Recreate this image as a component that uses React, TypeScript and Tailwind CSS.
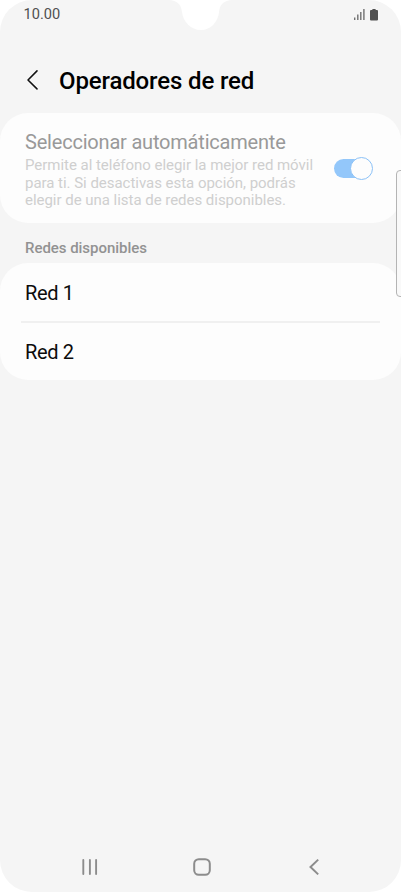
import { useState } from "react"

interface ToggleProps {
  checked: boolean
  disabled?: boolean
  onChange: (value: boolean) => void
}

function Toggle({ checked, disabled, onChange }: ToggleProps) {
  return (
    <button
      type="button"
      role="switch"
      aria-checked={checked}
      aria-label="Seleccionar automáticamente"
      disabled={disabled}
      onClick={() => onChange(!checked)}
      className={`flex items-center w-[38px] h-[19px] rounded-full shrink-0 ${
        checked ? "justify-end bg-[#93c7fa]" : "justify-start bg-[#cccccc]"
      }`}
    >
      <span className="w-[23px] h-[23px] -mr-px shrink-0 rounded-full border border-[#8bc1f7] bg-[#fdfdfd]" />
    </button>
  )
}

function StatusBar() {
  return (
    <div className="flex justify-between h-[30px] pl-[23.5px] pr-[23px]">
      <span className="pt-[5px] text-[14.6px] leading-[18px] text-[#505050]">10.00</span>

      <div className="flex gap-[5px] pt-[9px]">
        <svg width="11" height="11" viewBox="0 0 11 11" fill="#707070">
          <rect x="0" y="8.5" width="1.4" height="2.5" />
          <rect x="3.1" y="5.5" width="1.4" height="5.5" />
          <rect x="6.1" y="3" width="1.4" height="8" />
          <rect x="9.2" y="0" width="1.4" height="11" />
        </svg>
        <svg width="8" height="12" viewBox="0 0 8 12" fill="#505050">
          <path d="M2.3 1V.5Q2.3 0 2.8 0h2.4q.5 0 .5.5V1H7q1 0 1 1v8.5Q8 11.5 7 11.5H1q-1 0-1-1V2Q0 1 1 1z" />
        </svg>
      </div>
    </div>
  )
}

function NavBar() {
  return (
    <nav className="flex items-center h-[51px] pl-[81px] pr-[78px] justify-between text-[#8c8c8c]">
      <button aria-label="Recientes">
        <svg width="18" height="18" viewBox="0 0 18 18" stroke="currentColor" strokeWidth="1.9" strokeLinecap="round">
          <path d="M2.3 2v14M8.9 2v14M15.1 2v14" />
        </svg>
      </button>

      <button aria-label="Inicio">
        <svg width="18" height="18" viewBox="0 0 18 18" fill="none" stroke="currentColor" strokeWidth="2">
          <rect x="1.2" y="1.2" width="15.6" height="15.6" rx="4.6" />
        </svg>
      </button>

      <button aria-label="Atrás">
        <svg width="18" height="18" viewBox="0 0 18 18" fill="none" stroke="currentColor" strokeWidth="2">
          <path d="M13.2 1.6 5.5 9l7.7 7.4" />
        </svg>
      </button>
    </nav>
  )
}

export default function App() {

  const [auto, setAuto] = useState(true)

  const networks = ["Red 1", "Red 2"]

  return (
    <div className="w-[401px] h-[892px] bg-white overflow-hidden font-[Roboto,sans-serif]">

      <div className="relative flex flex-col h-full rounded-[32px] bg-[#f5f5f5] overflow-hidden">

        {/* Camera notch */}

        <svg className="absolute top-0 left-[169px]" width="64" height="30" viewBox="0 0 64 30" fill="#ffffff">
          <path d="M0 0C8 .5 12 4 13 12C14 22 22 30 32 30S49 22 50 12C51 4 55 .5 63 0z" />
        </svg>

        <StatusBar />

        <header className="flex items-center h-[83px] pl-[26px] pt-[17px]">
          <button aria-label="Volver" className="w-[33px]">
            <svg width="13" height="20" viewBox="0 0 13 20" fill="none" stroke="#111111" strokeWidth="1.5" strokeLinecap="round" strokeLinejoin="round">
              <path d="M11 .9 2 10l9 8.9" />
            </svg>
          </button>
          <h1 className="pt-[2px] text-[24px] leading-[28px] font-medium tracking-[-0.13px] text-black">
            Operadores de red
          </h1>
        </header>

        <section className="flex items-center justify-between h-[110px] pl-[25px] pr-[29px] rounded-[28px] bg-[#fdfdfd]">
          <div className="pt-[4px]">
            <h2 className="text-[20px] leading-[24px] tracking-[-0.2px] text-[#999999]">
              Seleccionar automáticamente
            </h2>
            <p className="pt-[3px] text-[15px] leading-[17.5px] tracking-[-0.03px] text-[#cfcfcf] whitespace-nowrap">
              Permite al teléfono elegir la mejor red móvil<br />
              para ti. Si desactivas esta opción, podrás<br />
              elegir de una lista de redes disponibles.
            </p>
          </div>
          <Toggle checked={auto} disabled onChange={setAuto} />
        </section>

        <h3 className="h-[40px] pl-[25px] pt-[16px] text-[15px] leading-[18px] font-medium tracking-[-0.04px] text-[#929292]">
          Redes disponibles
        </h3>

        <ul className="h-[117px] px-[21px] rounded-[28px] bg-[#fdfdfd] divide-y-2 divide-[#f0f0f0]">
          {networks.map((name) => (
            <li key={name} className="flex items-center h-[60px] pt-[2px] last:pt-0 last:h-[57px] pl-[4px] text-[20px] tracking-[-0.35px] text-[#0c0c0c]">
              {name}
            </li>
          ))}
        </ul>

        {/* Edge panel handle */}

        <div className="absolute top-[170px] left-[396px] w-[12px] h-[127px] rounded-[4px] border border-[#b4b4b4] bg-[#f9f9f9]" />

        <div className="mt-auto">
          <NavBar />
        </div>

      </div>

    </div>
  )
}
